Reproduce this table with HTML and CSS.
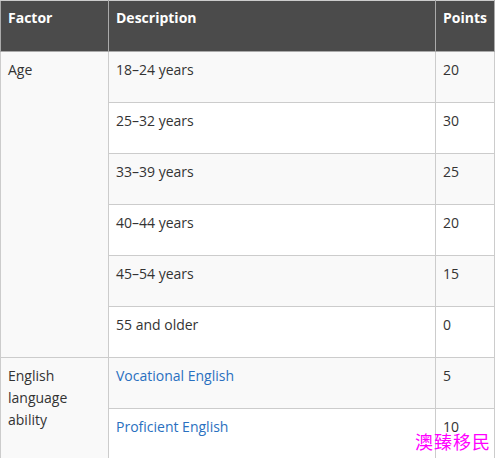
FILE: index.html
```html
<!DOCTYPE html>
<html>
<head>
<meta charset="utf-8">
<link rel="stylesheet" href="styles.css">
</head>
<body>
<table class="points">
  <thead>
    <tr><th class="c1">Factor</th><th class="c2">Description</th><th class="c3">Points</th></tr>
  </thead>
  <tbody>
    <tr class="odd"><td rowspan="6" class="factor">Age</td><td>18–24 years</td><td>20</td></tr>
    <tr class="even"><td>25–32 years</td><td>30</td></tr>
    <tr class="odd"><td>33–39 years</td><td>25</td></tr>
    <tr class="even"><td>40–44 years</td><td>20</td></tr>
    <tr class="odd"><td>45–54 years</td><td>15</td></tr>
    <tr class="even"><td>55 and older</td><td>0</td></tr>
    <tr class="odd"><td rowspan="2" class="factor">English language ability</td><td><a href="#">Vocational English</a></td><td>5</td></tr>
    <tr class="even"><td><a href="#">Proficient English</a></td><td>10</td></tr>
  </tbody>
</table>
<div class="watermark">澳臻移民</div>
</body>
</html>
```
FILE: styles.css
```css
html, body {
  margin: 0;
  padding: 0;
  background: #fff;
}
body {
  font-family: "Open Sans", "Noto Sans", sans-serif;
  font-size: 14px;
  line-height: 22px;
  color: #333;
  overflow: hidden;
  height: 458px;
  position: relative;
}
.points {
  border-collapse: collapse;
  width: 494px;
  table-layout: fixed;
  border-left: 1px solid #7a7a7a;
}
.points th, .points td {
  border: 1px solid #ccc;
  text-align: left;
  vertical-align: top;
  padding: 7px 8px 0 7px;
  height: 43px;
}
.points th {
  background: #4b4b4b;
  color: #fff;
  font-weight: 700;
  border-color: #aaa;
  border-top-color: #ccc;
  padding-top: 6px;
  height: 44px;
}
.points th.c1 { width: 92px; }
.points th.c2 { width: 311px; }
.points th.c3 { width: 43px; }
.odd td { background: #f9f9f9; }
.even td { background: #fff; }
.points a {
  color: #2a70c0;
  text-decoration: none;
}
.watermark {
  position: absolute;
  left: 415px;
  top: 428px;
  font-family: "Noto Sans CJK SC", sans-serif;
  font-size: 18px;
  line-height: 26px;
  color: #ff00ff;
  letter-spacing: 1px;
}
```
